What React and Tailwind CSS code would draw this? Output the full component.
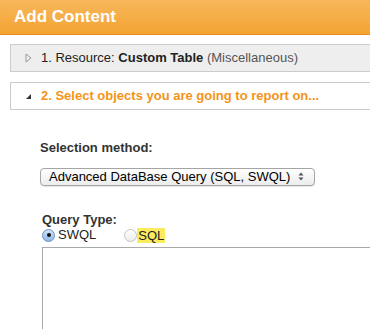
import React from 'react';

// Wizard panel: "Add Content" with collapsible steps
const Step = ({ open, children }) => (
  <div
    className={`ml-[10px] h-[28px] flex items-center border border-[#cccccc] border-r-0 ${
      open ? 'bg-white' : 'bg-[#eeeeee]'
    }`}
  >
    <span className="w-[30px] flex justify-center pl-[4px]">
      {open ? (
        <svg width="7" height="7" viewBox="0 0 7 7">
          <path d="M6 1 L6 6 L1 6 Z" fill="#333" />
        </svg>
      ) : (
        <svg width="7" height="10" viewBox="0 0 7 10">
          <path d="M1 1 L6 5 L1 9 Z" fill="none" stroke="#999" strokeWidth="1" />
        </svg>
      )}
    </span>
    {children}
  </div>
);

export default function App() {
  return (
    <div className="w-[370px] h-[329px] overflow-hidden bg-white font-['Liberation_Sans',Arial,sans-serif] text-[#222]">
      <div className="h-[35px] bg-gradient-to-b from-[#f7b75a] to-[#f4a431] border-b border-[#e48f1f] flex items-center pl-[14px]">
        <span className="text-white font-bold text-[17px]">Add Content</span>
      </div>

      <div className="mt-[9px]">
        <Step>
          <span className="text-[13px]">
            1. Resource: <b>Custom Table</b> <span className="text-[#555]">(Miscellaneous)</span>
          </span>
        </Step>
      </div>

      <div className="mt-[10px]">
        <Step open>
          <span className="text-[13px] font-bold text-[#f39419]">
            2. Select objects you are going to report on...
          </span>
        </Step>
      </div>

      <div className="pl-[40px] pt-[28px]">
        <div className="text-[13px] font-bold text-[#333]">Selection method:</div>
        <div className="mt-[10px] w-[275px] h-[18px] border border-[#a5a5a5] rounded-[4px] bg-gradient-to-b from-white to-[#ececec] flex items-center justify-between pl-[8px] pr-[10px] shadow-[0_1px_1px_rgba(0,0,0,0.1)]">
          <span className="text-[13px] text-black">Advanced DataBase Query (SQL, SWQL)</span>
          <svg width="6" height="9" viewBox="0 0 6 9">
            <path d="M3 0.5 L5.5 3.5 L0.5 3.5 Z M3 8.5 L5.5 5.5 L0.5 5.5 Z" fill="#555" />
          </svg>
        </div>

        <div className="mt-[26px] pl-[2px] text-[13px] font-bold text-[#333] leading-[15px]">Query Type:</div>
        <div className="pl-[2px] flex items-center h-[17px] text-[13px]">
          <span className="w-[13px] h-[13px] rounded-full border border-[#6c8fbf] bg-gradient-to-b from-[#cfe3fb] to-[#8fb8ec] flex items-center justify-center">
            <span className="w-[4px] h-[4px] rounded-full bg-[#111]" />
          </span>
          <span className="ml-[3px]">SWQL</span>
          <span className="ml-[28px] w-[13px] h-[13px] rounded-full border border-[#c4c4c4] bg-gradient-to-b from-white to-[#ececec]" />
          <span className="bg-[#fbec5d] px-[1px] leading-[15px]">SQL</span>
        </div>
        <div className="mt-[3px] ml-[2px] h-[120px] border border-[#a9a9a9] border-r-0" />
      </div>
    </div>
  );
}
